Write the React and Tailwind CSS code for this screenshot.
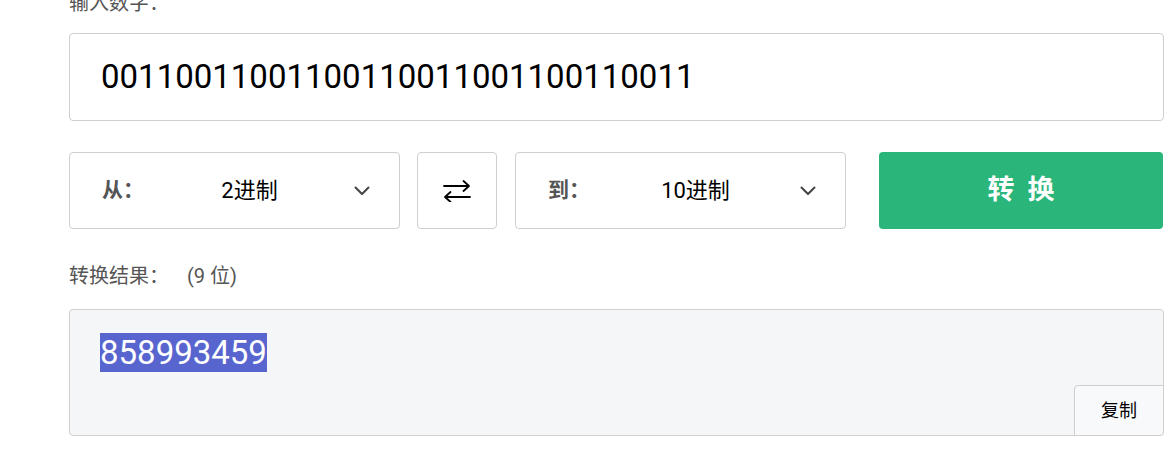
import React from "react";

const font = { fontFamily: 'Roboto, "Noto Sans CJK SC", sans-serif' };

function Chevron() {
  return (
    <svg width="16" height="10" viewBox="0 0 16 10" fill="none" stroke="#444" strokeWidth="2" strokeLinecap="round" strokeLinejoin="round">
      <path d="M1.5 1.5 L8 8 L14.5 1.5" />
    </svg>
  );
}

function Select({ label, value }) {
  return (
    <div className="w-[331px] h-[77px] shrink-0 flex items-center pl-[32px] pr-[29px] border border-[#cfcfcf] rounded-[4px] bg-white">
      <span className="w-[43px] shrink-0 text-[21px] font-bold text-[#555] whitespace-nowrap">{label}</span>
      <span className="flex-1 text-center text-[22px] text-black">{value}</span>
      <Chevron />
    </div>
  );
}

export default function App() {
  return (
    <div className="bg-white w-[1176px] h-[450px] overflow-hidden" style={font}>
      <div className="ml-[69px] w-[1095px] mt-[-11px] flex flex-col">
        <div className="text-[20px] leading-[28px] text-[#555]">输入数字：</div>
        <div className="mt-[16px] h-[88px] border border-[#cfcfcf] rounded-[4px] flex items-center pl-[31px] text-[33px] text-black">
          00110011001100110011001100110011
        </div>
        <div className="mt-[31px] flex items-center">
          <Select label="从：" value="2进制" />
          <div className="ml-[17px] w-[80px] h-[77px] shrink-0 border border-[#cfcfcf] rounded-[4px] flex items-center justify-center">
            <svg width="30" height="22" viewBox="0 0 30 22" fill="none" stroke="#000" strokeWidth="1.8" strokeLinecap="round" strokeLinejoin="round">
              <path d="M2 6 H27 M21.5 1 L27 6 L21.5 11" />
              <path d="M28 17 H3 M8.5 12 L3 17 L8.5 22" />
            </svg>
          </div>
          <div className="ml-[18px]">
            <Select label="到：" value="10进制" />
          </div>
          <button className="ml-[33px] w-[284px] h-[77px] shrink-0 rounded-[4px] bg-[#2ab57a] text-white text-[27px] font-bold tracking-[13px] pl-[13px]">
            转换
          </button>
        </div>
        <div className="mt-[33px] text-[20px] leading-[28px] text-[#555] flex">
          <span>转换结果：</span>
          <span className="ml-[18px]">(9 位)</span>
        </div>
        <div className="mt-[19px] h-[127px] relative border border-[#cfcfcf] rounded-[4px] bg-[#f5f6f8] pl-[30px] pt-[24px]">
          <span className="text-[33px] leading-[38px] bg-[#5865cf] text-white">858993459</span>
          <div className="absolute right-[-1px] bottom-[-1px] w-[90px] h-[51px] border border-[#cfcfcf] rounded-tl-[4px] rounded-br-[4px] bg-[#f8f9fb] flex items-center justify-center text-[18px] text-black">
            复制
          </div>
        </div>
      </div>
    </div>
  );
}
